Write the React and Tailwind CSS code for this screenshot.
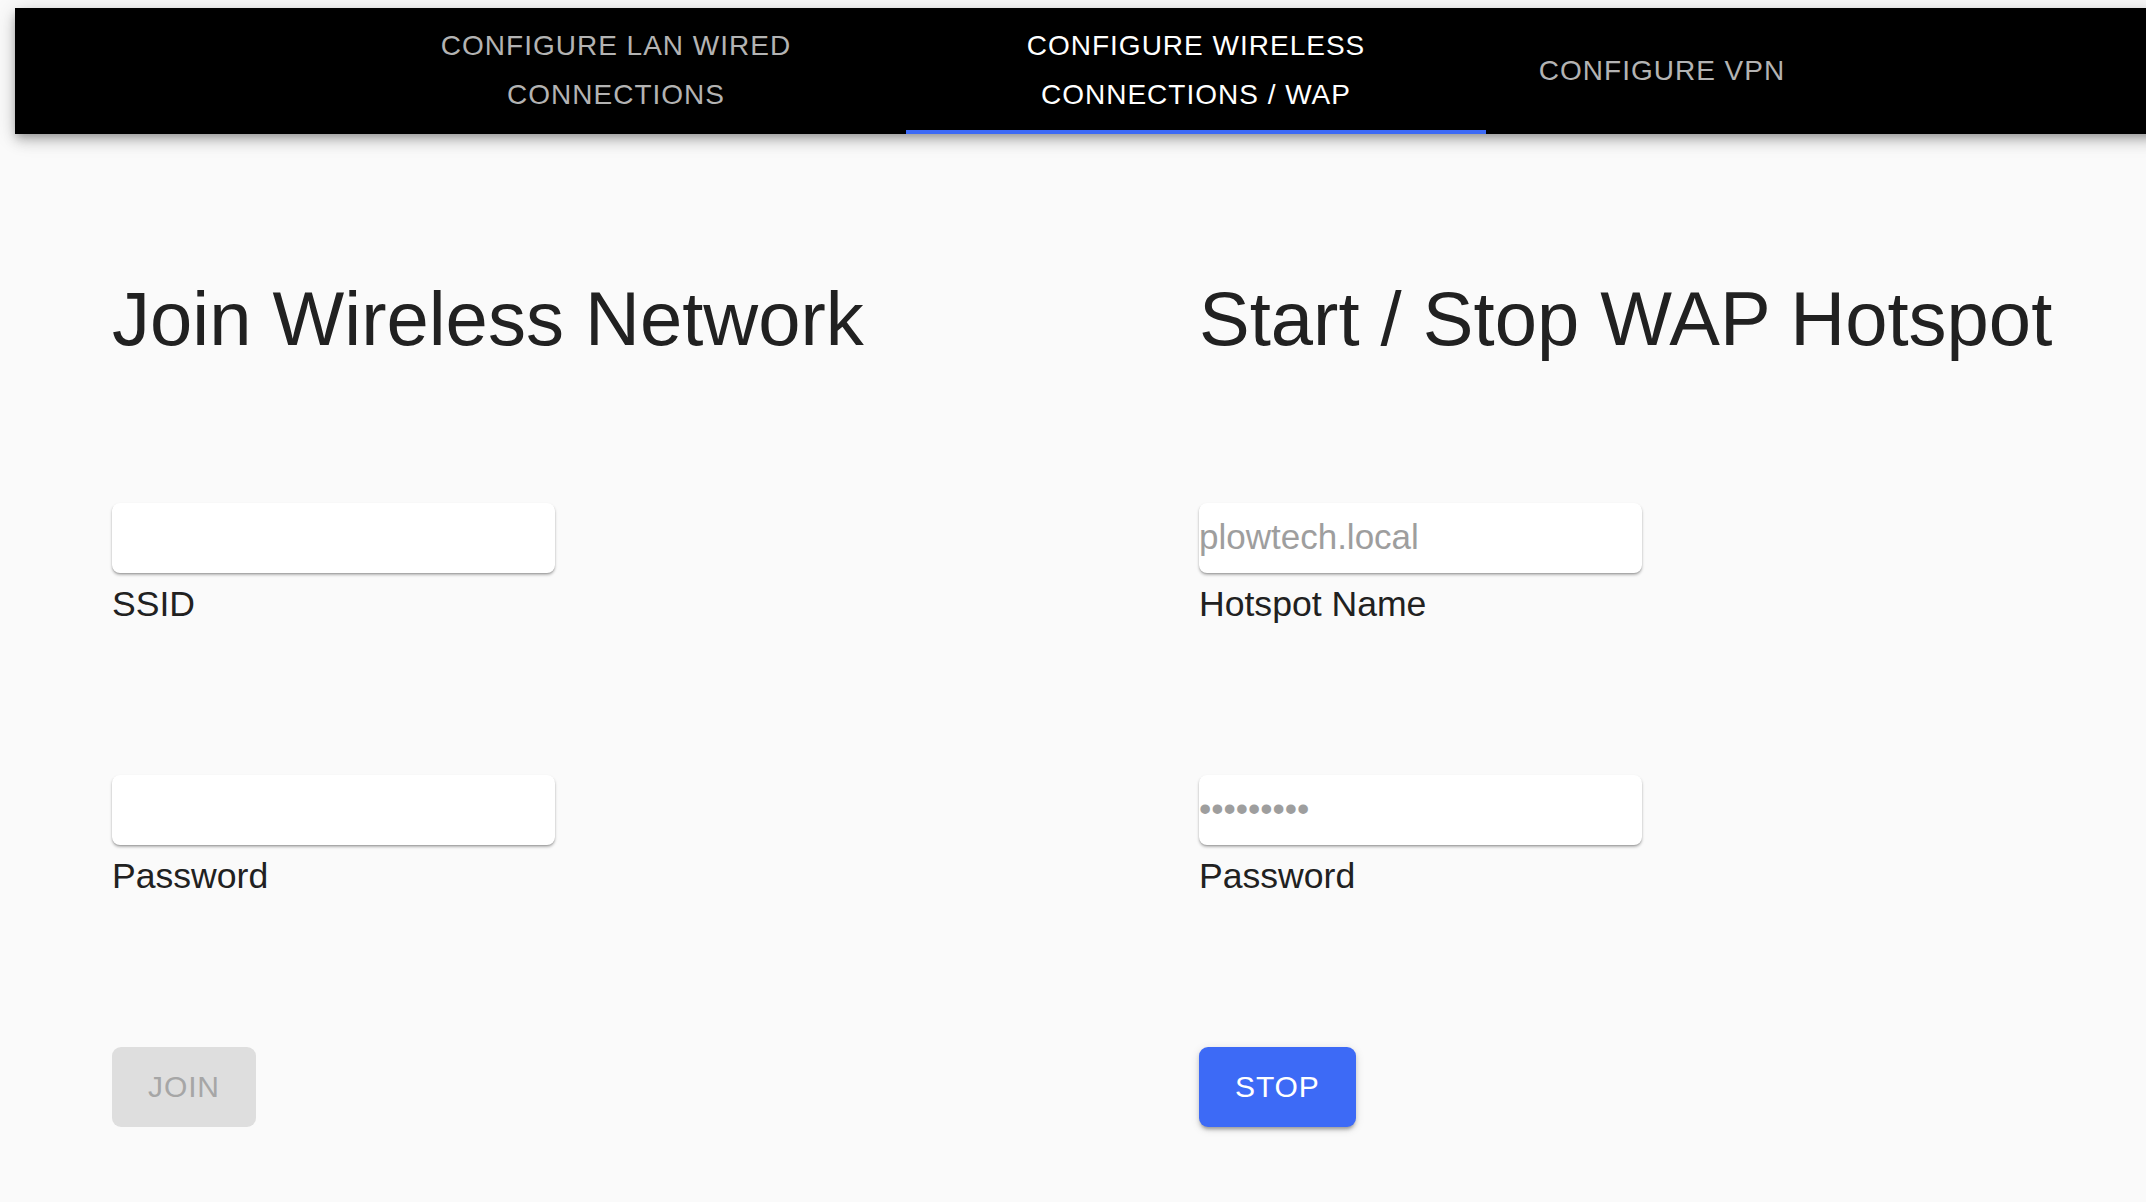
import { useState } from 'react';

const tabs = [
  { id: 'lan', lines: ['CONFIGURE LAN WIRED', 'CONNECTIONS'], width: 'w-[580px]' },
  { id: 'wireless', lines: ['CONFIGURE WIRELESS', 'CONNECTIONS / WAP'], width: 'w-[580px]' },
  { id: 'vpn', lines: ['CONFIGURE VPN'], width: 'w-[352px]' },
];

const Field = ({ label, type = 'text', value, onChange, disabled, className = '' }) => (
  <div className={className}>
    <input
      type={type}
      value={value}
      onChange={e => onChange && onChange(e.target.value)}
      disabled={disabled}
      className="block w-[443px] h-[70px] pb-[2px] bg-white rounded-[8px] text-[35px] text-[#212121] disabled:text-[#9e9e9e] outline-none shadow-[0_2px_3px_rgba(0,0,0,0.28),0_1px_1px_rgba(0,0,0,0.12)]"
    />
    <label className="block mt-[11px] text-[35.6px] leading-[40px] text-[#212121]">{label}</label>
  </div>
);

const App = () => {
  const [active, setActive] = useState('wireless');
  const [ssid, setSsid] = useState('');
  const [password, setPassword] = useState('');

  return (
    <div className="min-h-screen bg-[#fafafa] overflow-hidden font-['Liberation_Sans',Arial,sans-serif]">
      <nav className="mt-[8px] ml-[15px] w-[2146px] h-[126px] bg-black flex pl-[311px] shadow-[0_4px_8px_-2px_rgba(0,0,0,0.25),0_8px_12px_0_rgba(0,0,0,0.14),0_2px_22px_0_rgba(0,0,0,0.14)]">
        {tabs.map(tab => (
          <button
            key={tab.id}
            onClick={() => setActive(tab.id)}
            className={`relative ${tab.width} h-full flex flex-col items-center justify-center pb-[2px] text-[28px] leading-[49px] tracking-[1px] ${active === tab.id ? 'text-white' : 'text-[#b3b3b3]'}`}
          >
            {tab.lines.map(line => <span key={line}>{line}</span>)}
            {active === tab.id && <span className="absolute left-0 right-0 bottom-0 h-[4px] bg-[#3d6af6]" />}
          </button>
        ))}
      </nav>

      <main className="flex pl-[112px] pt-[141px]">
        <section className="w-[1087px]">
          <h2 className="text-[76px] leading-[88px] text-[#212121]">Join Wireless Network</h2>
          <Field className="mt-[140px]" label="SSID" value={ssid} onChange={setSsid} />
          <Field className="mt-[151px]" label="Password" type="password" value={password} onChange={setPassword} />
          <button disabled className="mt-[151px] h-[80px] px-[36px] pb-[2px] rounded-[9px] bg-[#dedede] text-[#a6a6a6] text-[30px] tracking-[0.9px]">
            JOIN
          </button>
        </section>

        <section>
          <h2 className="text-[76px] leading-[88px] text-[#212121]">Start / Stop WAP Hotspot</h2>
          <Field className="mt-[140px]" label="Hotspot Name" value="plowtech.local" disabled />
          <Field className="mt-[151px]" label="Password" type="password" value="plowtech1" disabled />
          <button className="mt-[151px] h-[80px] px-[36px] pb-[2px] rounded-[9px] bg-[#3d6af6] text-white text-[30px] tracking-[0.9px] shadow-[0_4px_3px_-2px_rgba(0,0,0,0.2),0_3px_4px_0_rgba(0,0,0,0.14),0_2px_10px_0_rgba(0,0,0,0.12)]">
            STOP
          </button>
        </section>
      </main>
    </div>
  );
};

export default App;
